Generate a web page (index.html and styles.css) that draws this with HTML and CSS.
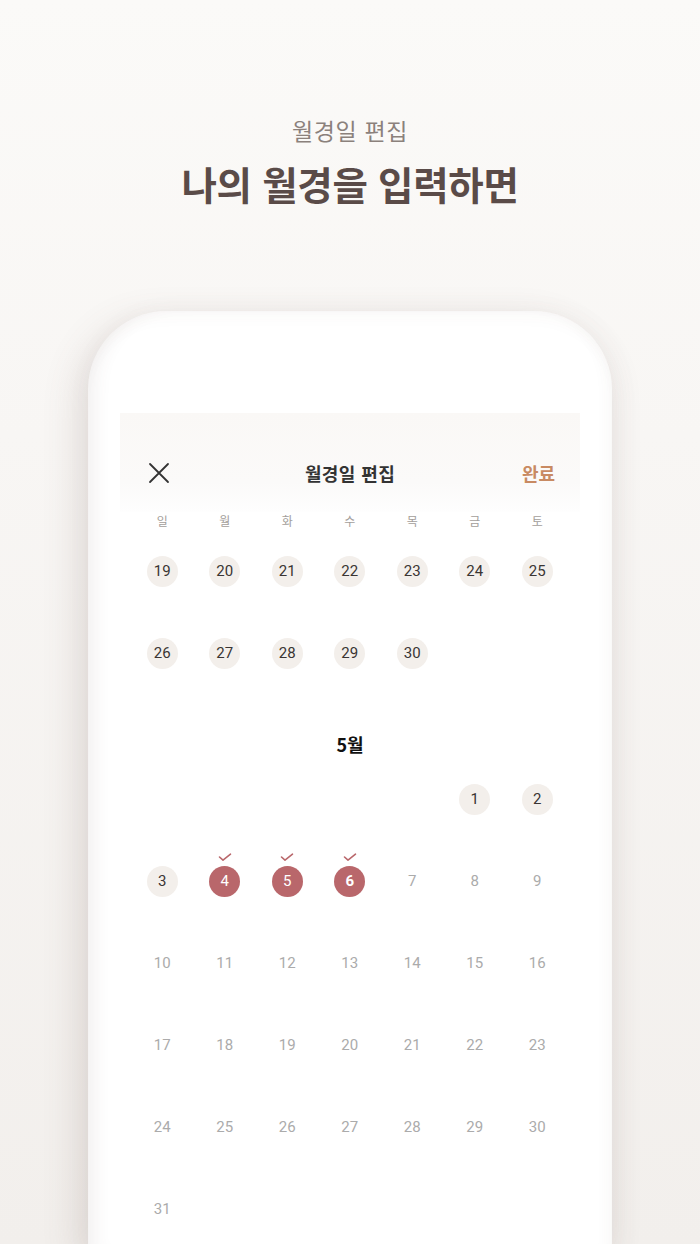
FILE: index.html
```html
<!DOCTYPE html>
<html lang="ko">
<head>
<meta charset="utf-8">
<title>월경일 편집</title>
<link rel="stylesheet" href="styles.css">
</head>
<body>
<div class="page">
  <header class="hero">
    <p class="hero-sub">월경일 편집</p>
    <h1 class="hero-title">나의 월경을 입력하면</h1>
  </header>

  <div class="phone">
    <div class="screen">
      <div class="navbar">
        <span class="nav-close">
          <svg width="22" height="22" viewBox="0 0 22 22"><path d="M2 2 L20 20 M20 2 L2 20" stroke="#333" stroke-width="1.8" stroke-linecap="round" fill="none"/></svg>
        </span>
        <span class="nav-title">월경일 편집</span>
        <span class="nav-done">완료</span>
      </div>

      <div class="weekdays">
        <span>일</span><span>월</span><span>화</span><span>수</span><span>목</span><span>금</span><span>토</span>
      </div>

      <div class="grid">
        <span class="day past"><b>19</b></span>
        <span class="day past"><b>20</b></span>
        <span class="day past"><b>21</b></span>
        <span class="day past"><b>22</b></span>
        <span class="day past"><b>23</b></span>
        <span class="day past"><b>24</b></span>
        <span class="day past"><b>25</b></span>
        <span class="day past"><b>26</b></span>
        <span class="day past"><b>27</b></span>
        <span class="day past"><b>28</b></span>
        <span class="day past"><b>29</b></span>
        <span class="day past"><b>30</b></span>
      </div>

      <div class="month-label">5월</div>

      <div class="grid">
        <span class="day empty"></span>
        <span class="day empty"></span>
        <span class="day empty"></span>
        <span class="day empty"></span>
        <span class="day empty"></span>
        <span class="day past"><b>1</b></span>
        <span class="day past"><b>2</b></span>
        <span class="day past"><b>3</b></span>
        <span class="day sel"><svg class="check" width="14" height="9" viewBox="0 0 14 9"><path d="M1.5 4 L5 7.2 L12.5 1.2" stroke="#b9676b" stroke-width="1.6" fill="none" stroke-linecap="round" stroke-linejoin="round"/></svg><b>4</b></span>
        <span class="day sel"><svg class="check" width="14" height="9" viewBox="0 0 14 9"><path d="M1.5 4 L5 7.2 L12.5 1.2" stroke="#b9676b" stroke-width="1.6" fill="none" stroke-linecap="round" stroke-linejoin="round"/></svg><b>5</b></span>
        <span class="day sel today"><svg class="check" width="14" height="9" viewBox="0 0 14 9"><path d="M1.5 4 L5 7.2 L12.5 1.2" stroke="#b9676b" stroke-width="1.6" fill="none" stroke-linecap="round" stroke-linejoin="round"/></svg><b>6</b></span>
        <span class="day future"><b>7</b></span>
        <span class="day future"><b>8</b></span>
        <span class="day future"><b>9</b></span>
        <span class="day future"><b>10</b></span>
        <span class="day future"><b>11</b></span>
        <span class="day future"><b>12</b></span>
        <span class="day future"><b>13</b></span>
        <span class="day future"><b>14</b></span>
        <span class="day future"><b>15</b></span>
        <span class="day future"><b>16</b></span>
        <span class="day future"><b>17</b></span>
        <span class="day future"><b>18</b></span>
        <span class="day future"><b>19</b></span>
        <span class="day future"><b>20</b></span>
        <span class="day future"><b>21</b></span>
        <span class="day future"><b>22</b></span>
        <span class="day future"><b>23</b></span>
        <span class="day future"><b>24</b></span>
        <span class="day future"><b>25</b></span>
        <span class="day future"><b>26</b></span>
        <span class="day future"><b>27</b></span>
        <span class="day future"><b>28</b></span>
        <span class="day future"><b>29</b></span>
        <span class="day future"><b>30</b></span>
        <span class="day future"><b>31</b></span>
      </div>
    </div>
  </div>
</div>
</body>
</html>
```

FILE: styles.css
```css
* { box-sizing: border-box; }

html, body {
  margin: 0;
  padding: 0;
}

body {
  width: 700px;
  height: 1244px;
  overflow: hidden;
  background: linear-gradient(180deg, #fbfaf8 0%, #f8f6f4 35%, #f2efec 100%);
  font-family: Roboto, "Noto Sans CJK KR", sans-serif;
}

.page {
  height: 1244px;
  display: flex;
  flex-direction: column;
}

.hero {
  flex: none;
  padding-top: 114px;
  text-align: center;
  height: 311px;
}

.hero-sub {
  margin: 0;
  font-family: "Noto Sans CJK KR", sans-serif;
  font-size: 23px;
  line-height: 32px;
  color: #8b817c;
  font-weight: 400;
  letter-spacing: 0.6px;
}

.hero-title {
  margin: 14px 0 0;
  font-family: "Noto Sans CJK KR", sans-serif;
  font-size: 38.5px;
  line-height: 46px;
  font-weight: 700;
  color: #5a4b48;
  letter-spacing: -0.3px;
}

.phone {
  margin-left: 88px;
  width: 524px;
  flex: 1 0 auto;
  background: #fff;
  border-radius: 78px 78px 0 0;
  padding: 102px 32px 0;
  box-shadow:
    -10px 10px 36px rgba(110, 90, 80, 0.16),
    6px 6px 30px rgba(110, 90, 80, 0.06),
    inset 16px 0 18px -10px rgba(90, 70, 60, 0.08),
    inset -12px 0 16px -10px rgba(90, 70, 60, 0.05),
    inset 0 14px 18px -10px rgba(90, 70, 60, 0.04);
}

.screen {
  background: #fff;
}

.navbar {
  height: 99px;
  padding: 40px 25px 19px 28px;
  background: linear-gradient(180deg, #faf8f6 0%, #fbfaf9 70%, #fefefe 100%);
  display: flex;
  align-items: center;
  justify-content: space-between;
  position: relative;
}

.nav-close {
  width: 22px;
  height: 22px;
  display: flex;
}

.nav-title {
  position: absolute;
  left: 0;
  right: 0;
  top: 40px;
  line-height: 40px;
  text-align: center;
  font-family: "Noto Sans CJK KR", sans-serif;
  font-size: 18px;
  font-weight: 700;
  color: #333;
  letter-spacing: 0.4px;
  pointer-events: none;
}

.nav-done {
  font-family: "Noto Sans CJK KR", sans-serif;
  font-size: 18px;
  font-weight: 700;
  color: #c88a62;
  line-height: 40px;
}

.weekdays {
  display: grid;
  grid-template-columns: repeat(7, 62.5px);
  padding-left: 11px;
  height: 18px;
}

.weekdays span {
  text-align: center;
  font-family: "Noto Sans CJK KR", sans-serif;
  font-size: 12px;
  line-height: 18px;
  color: #a39e9b;
}

.grid {
  display: grid;
  grid-template-columns: repeat(7, 62.5px);
  grid-auto-rows: 82px;
  padding-left: 11px;
}

.day {
  display: flex;
  align-items: center;
  justify-content: center;
  position: relative;
}

.day b {
  width: 31px;
  height: 31px;
  border-radius: 50%;
  display: flex;
  align-items: center;
  justify-content: center;
  font-weight: 400;
  font-size: 15px;
  color: #3a3533;
}

.day.past b {
  background: #f3efeb;
}

.day.sel b {
  background: #b9676b;
  color: #fff;
}

.day.today b {
  font-weight: 700;
}

.day.future b {
  color: #ababab;
}

.check {
  position: absolute;
  left: 50%;
  top: 13px;
  margin-left: -7px;
}

.month-label {
  height: 64px;
  padding-top: 40px;
  line-height: 20px;
  text-align: center;
  font-family: "Noto Sans CJK KR", sans-serif;
  font-size: 18px;
  font-weight: 700;
  color: #111;
}
```
